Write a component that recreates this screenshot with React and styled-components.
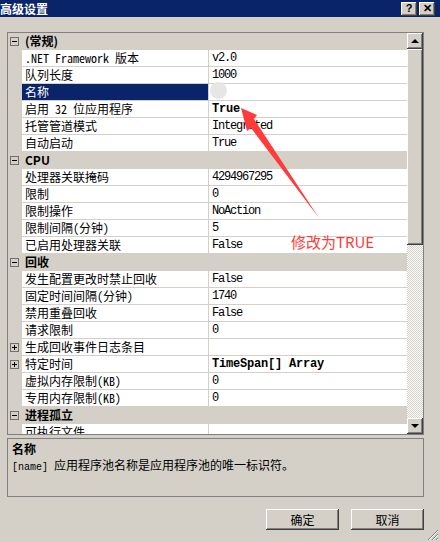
import styled, { createGlobalStyle } from "styled-components";

const GlobalStyle = createGlobalStyle`
  html, body {
    margin: 0;
    padding: 0;
    background: #d4d0c8;
  }
  body {
    font-family: "Noto Sans CJK SC", "Liberation Sans", sans-serif;
    font-size: 12px;
    color: #000;
  }
`;

const Window = styled.div`
  position: relative;
  width: 440px;
  height: 542px;
  overflow: hidden;
  background: #d4d0c8;
  display: flex;
  flex-direction: column;
`;

const TitleBar = styled.div`
  height: 17px;
  flex: none;
  background: #0a246a;
  display: flex;
  align-items: center;
  justify-content: space-between;
  padding-right: 5px;
`;

const Title = styled.span`
  color: #fff;
  font-weight: bold;
  font-size: 12px;
  line-height: 17px;
`;

const TitleButtons = styled.div`
  display: flex;
  gap: 2px;
`;

const TitleButton = styled.span`
  width: 16px;
  height: 14px;
  box-sizing: border-box;
  background: #d4d0c8;
  box-shadow: inset -1px -1px #404040, inset 1px 1px #fff, inset -2px -2px #808080;
  display: flex;
  align-items: center;
  justify-content: center;
  font-family: "Liberation Sans", sans-serif;
  font-weight: bold;
  font-size: 11px;
  line-height: 1;
`;

const Content = styled.div`
  flex: 1;
  display: flex;
  flex-direction: column;
  padding: 15px 16px 0 7px;
`;

const Grid = styled.div`
  height: 403px;
  box-sizing: border-box;
  border: 1px solid #808080;
  display: flex;
  background: #d4d0c8;
`;

const List = styled.div`
  flex: 1;
  overflow: hidden;
  display: flex;
  flex-direction: column;
`;

const Row = styled.div`
  flex: none;
  height: 17px;
  display: flex;
  background: #d4d0c8;
`;

const Gutter = styled.div`
  width: 14px;
  flex: none;
  display: flex;
  align-items: center;
  padding-left: 2px;
  box-sizing: border-box;
`;

const Toggle = styled.span`
  position: relative;
  width: 9px;
  height: 9px;
  box-sizing: border-box;
  border: 1px solid #6f6f6f;
  &::before {
    content: "";
    position: absolute;
    left: 1px;
    top: 3px;
    width: 5px;
    height: 1px;
    background: #000;
  }
  &::after {
    content: "";
    display: ${(p) => (p.$open ? "none" : "block")};
    position: absolute;
    left: 3px;
    top: 1px;
    width: 1px;
    height: 5px;
    background: #000;
  }
`;

const CategoryLabel = styled.span`
  padding-left: 3px;
  font-weight: bold;
  line-height: 16px;
`;

const NameCell = styled.div`
  width: 186px;
  flex: none;
  box-sizing: border-box;
  padding-left: 3px;
  border-bottom: 1px solid #d4d0c8;
  background: ${(p) => (p.$selected ? "#0a246a" : "#fff")};
  color: ${(p) => (p.$selected ? "#fff" : "#000")};
  font-family: "Noto Sans Mono CJK SC", "Noto Sans CJK SC", sans-serif;
  line-height: 16px;
  white-space: nowrap;
  overflow: hidden;
`;

const ValueCell = styled.div`
  flex: 1;
  box-sizing: border-box;
  padding-left: 3px;
  border-left: 1px solid #d4d0c8;
  border-bottom: 1px solid #d4d0c8;
  background: #fff;
  font-family: "Liberation Mono", monospace;
  font-size: 12px;
  font-weight: ${(p) => (p.$bold ? "bold" : "normal")};
  letter-spacing: ${(p) => (p.$bold ? "-0.2px" : "-1.2px")};
  line-height: 16px;
  white-space: nowrap;
`;

const Scrollbar = styled.div`
  width: 16px;
  flex: none;
  display: flex;
  flex-direction: column;
`;

const ScrollButton = styled.div`
  height: 16px;
  flex: none;
  box-sizing: border-box;
  background: #d4d0c8;
  box-shadow: inset -1px -1px #404040, inset 1px 1px #fff, inset -2px -2px #808080;
  display: flex;
  align-items: center;
  justify-content: center;
  &::after {
    content: "";
    border-left: 4px solid transparent;
    border-right: 4px solid transparent;
    ${(p) => (p.$down ? "border-top: 4px solid #000;" : "border-bottom: 4px solid #000;")}
  }
`;

const Thumb = styled.div`
  height: 196px;
  flex: none;
  background: #d4d0c8;
  box-shadow: inset -1px -1px #404040, inset 1px 1px #fff, inset -2px -2px #808080;
`;

const Track = styled.div`
  flex: 1;
  background-image: conic-gradient(#fff 25%, #d4d0c8 0 50%, #fff 0 75%, #d4d0c8 0);
  background-size: 2px 2px;
`;

const Description = styled.div`
  margin-top: 3px;
  height: 59px;
  box-sizing: border-box;
  border: 1px solid #808080;
  padding: 3px 4px;
`;

const DescTitle = styled.div`
  font-weight: bold;
  line-height: 14px;
`;

const DescText = styled.div`
  margin-top: 2px;
  line-height: 14px;
`;

const Code = styled.span`
  font-family: "Liberation Mono", monospace;
  font-size: 10px;
  margin-right: 6px;
`;

const ButtonRow = styled.div`
  margin-top: 12px;
  display: flex;
  justify-content: flex-end;
  gap: 12px;
  padding-right: 16px;
  margin-right: -16px;
`;

const Button = styled.button`
  width: 73px;
  height: 21px;
  padding: 0;
  border: none;
  background: #d4d0c8;
  box-shadow: inset -1px -1px #404040, inset 1px 1px #fff, inset -2px -2px #808080;
  font-family: "Noto Sans CJK SC", sans-serif;
  font-size: 12px;
  color: #000;
`;

const Grip = styled.svg`
  position: absolute;
  right: 1px;
  bottom: 1px;
`;

const Overlay = styled.svg`
  position: absolute;
  left: 0;
  top: 0;
  pointer-events: none;
`;

const CursorShadow = styled.div`
  position: absolute;
  left: 210px;
  top: 82px;
  width: 17px;
  height: 17px;
  border-radius: 50%;
  background: #e7e5e5;
`;

const Note = styled.div`
  position: absolute;
  left: 291px;
  top: 232px;
  color: #ff3b3b;
  font-family: "Noto Sans CJK SC", sans-serif;
  font-size: 15px;
  line-height: 20px;
  white-space: nowrap;
`;

const rows = [
  { cat: "(常规)" },
  { name: ".NET Framework 版本", value: "v2.0" },
  { name: "队列长度", value: "1000" },
  { name: "名称", value: "", selected: true },
  { name: "启用 32 位应用程序", value: "True", bold: true },
  { name: "托管管道模式", value: "Integrated" },
  { name: "自动启动", value: "True" },
  { cat: "CPU" },
  { name: "处理器关联掩码", value: "4294967295" },
  { name: "限制", value: "0" },
  { name: "限制操作", value: "NoAction" },
  { name: "限制间隔(分钟)", value: "5" },
  { name: "已启用处理器关联", value: "False" },
  { cat: "回收" },
  { name: "发生配置更改时禁止回收", value: "False" },
  { name: "固定时间间隔(分钟)", value: "1740" },
  { name: "禁用重叠回收", value: "False" },
  { name: "请求限制", value: "0" },
  { name: "生成回收事件日志条目", value: "", expand: true },
  { name: "特定时间", value: "TimeSpan[] Array", bold: true, expand: true },
  { name: "虚拟内存限制(KB)", value: "0" },
  { name: "专用内存限制(KB)", value: "0" },
  { cat: "进程孤立" },
  { name: "可执行文件", value: "" },
];

export default function App() {
  return (
    <Window>
      <GlobalStyle />
      <TitleBar>
        <Title>高级设置</Title>
        <TitleButtons>
          <TitleButton>?</TitleButton>
          <TitleButton>✕</TitleButton>
        </TitleButtons>
      </TitleBar>
      <Content>
        <Grid>
          <List>
            {rows.map((r, i) =>
              r.cat ? (
                <Row key={i}>
                  <Gutter>
                    <Toggle $open />
                  </Gutter>
                  <CategoryLabel>{r.cat}</CategoryLabel>
                </Row>
              ) : (
                <Row key={i}>
                  <Gutter>{r.expand && <Toggle />}</Gutter>
                  <NameCell $selected={r.selected}>{r.name}</NameCell>
                  <ValueCell $bold={r.bold}>{r.value}</ValueCell>
                </Row>
              )
            )}
          </List>
          <Scrollbar>
            <ScrollButton />
            <Thumb />
            <Track />
            <ScrollButton $down />
          </Scrollbar>
        </Grid>
        <Description>
          <DescTitle>名称</DescTitle>
          <DescText>
            <Code>[name]</Code>应用程序池名称是应用程序池的唯一标识符。
          </DescText>
        </Description>
        <ButtonRow>
          <Button>确定</Button>
          <Button>取消</Button>
        </ButtonRow>
      </Content>

      <CursorShadow />
      <Overlay width="440" height="542" viewBox="0 0 440 542">
        <polygon
          points="241,108 257,115 254,119 319,218 251,128 247,131"
          fill="#ff3b3b"
        />
      </Overlay>
      <Note>修改为TRUE</Note>

      <Grip width="12" height="12" viewBox="0 0 12 12">
        <path d="M11 1 L1 11 M11 5 L5 11 M11 9 L9 11" stroke="#808080" strokeWidth="1" />
        <path d="M11 2 L2 11 M11 6 L6 11 M11 10 L10 11" stroke="#fff" strokeWidth="1" />
      </Grip>
    </Window>
  );
}
